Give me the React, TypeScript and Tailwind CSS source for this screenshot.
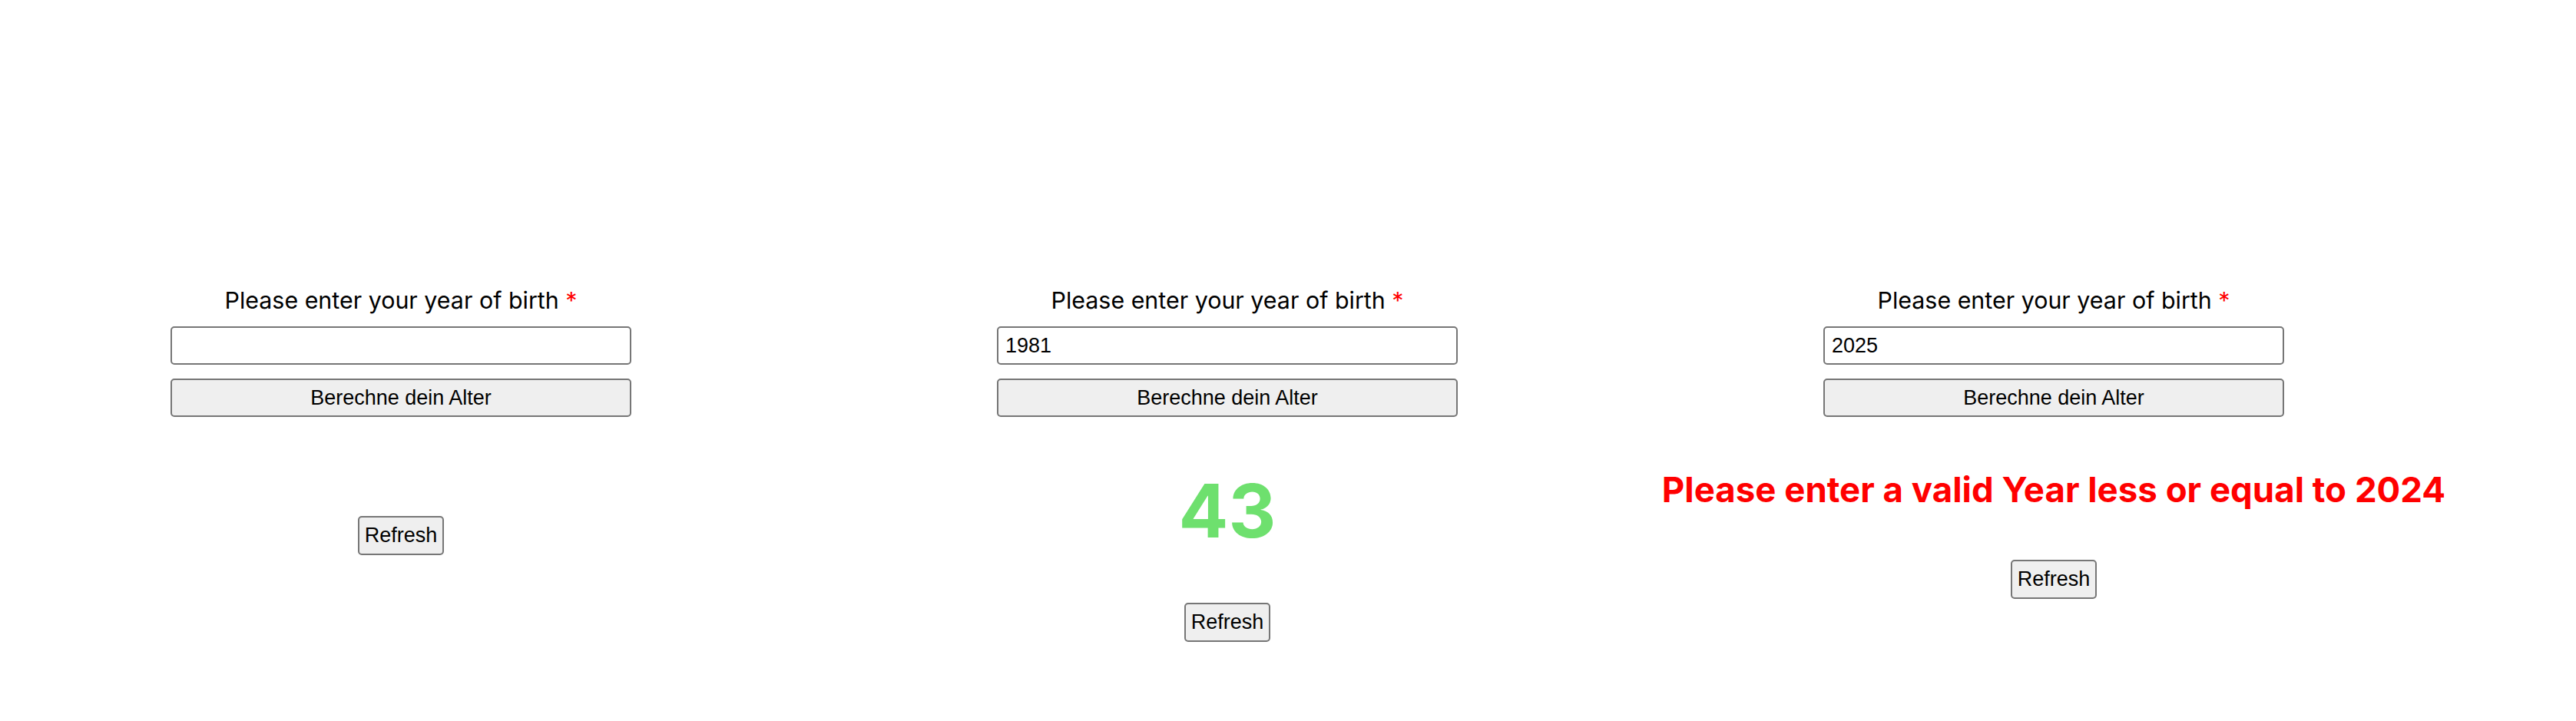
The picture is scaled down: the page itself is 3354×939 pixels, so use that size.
import React from 'react';

interface PanelProps {
  value: string;
  result?: 'age' | 'error';
}

const Panel: React.FC<PanelProps> = ({ value, result }) => {
  return (
    <div className="w-[1044px] flex flex-col items-center">
      <label className="font-['Inter',sans-serif] text-[30.4px] leading-[36px] text-black">
        Please enter your year of birth <span className="text-[#ff0000]">*</span>
      </label>
      <input
        type="text"
        defaultValue={value}
        className="mt-[16px] w-[600px] h-[50px] px-[9px] border-2 border-[#767676] rounded-[5px] bg-white font-['Liberation_Sans',Arial,sans-serif] text-[27px] text-black outline-none"
      />
      <button className="mt-[18px] w-[600px] h-[50px] border-2 border-[#767676] rounded-[5px] bg-[#efefef] font-['Liberation_Sans',Arial,sans-serif] text-[27px] text-black">
        Berechne dein Alter
      </button>

      {!result && <div className="h-[129px]"></div>}
      {result === 'age' && (
        <h1 className="mt-[74px] mb-[72px] font-['Inter',sans-serif] font-bold text-[96px] leading-none text-[#6ee06e]">
          43
        </h1>
      )}
      {result === 'error' && (
        <h2 className="mt-[72px] mb-[68px] whitespace-nowrap font-['Inter',sans-serif] font-bold text-[45.6px] leading-none text-[#ff0000]">
          Please enter a valid Year less or equal to 2024
        </h2>
      )}

      <button className="w-[112px] h-[51px] border-2 border-[#767676] rounded-[5px] bg-[#efefef] font-['Liberation_Sans',Arial,sans-serif] text-[27px] text-black">
        Refresh
      </button>
    </div>
  );
};

export default function App() {
  return (
    <div className="w-[3354px] h-[939px] bg-white pt-[373px]">
      <div className="flex gap-[32px]">
        <Panel value="" />
        <Panel value="1981" result="age" />
        <Panel value="2025" result="error" />
      </div>
    </div>
  );
}
